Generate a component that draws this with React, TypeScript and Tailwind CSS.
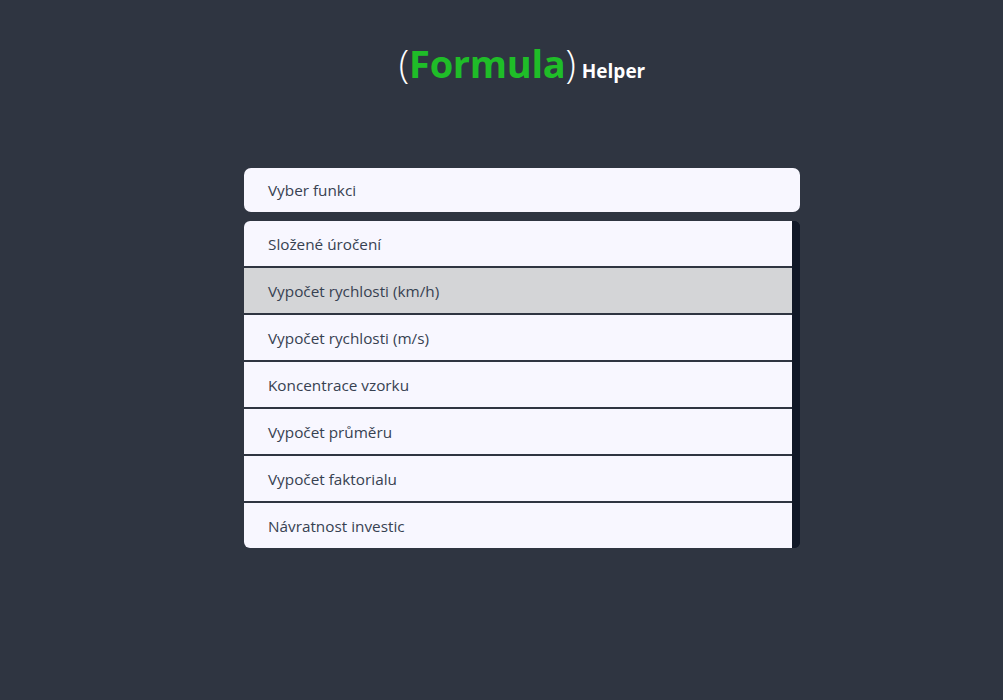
import React from "react";

const items = [
  "Složené úročení",
  "Vypočet rychlosti (km/h)",
  "Vypočet rychlosti (m/s)",
  "Koncentrace vzorku",
  "Vypočet průměru",
  "Vypočet faktorialu",
  "Návratnost investic",
];

export default function App() {
  return (
    <div
      className="min-h-[700px] w-full bg-[#2f3541] flex flex-col items-center pl-[41px]"
      style={{ fontFamily: '"Open Sans", "Noto Sans", sans-serif' }}
    >
      <h1 className="mt-[38px] flex items-baseline text-white">
        <span className="text-[38px] leading-[50px] font-light">(</span>
        <span className="text-[38px] leading-[50px] font-bold tracking-[-0.3px] text-[#1fbd28]">Formula</span>
        <span className="text-[38px] leading-[50px] font-light">)</span>
        <span className="ml-[6px] text-[19px] font-bold">Helper</span>
      </h1>
      <div className="mt-[80px] w-[556px]">
        <div className="h-[44px] rounded-[7px] bg-[#f8f7ff] flex items-center pl-[24px] pt-[1px] text-[15.3px] text-[#374151]">
          Vyber funkci
        </div>
        <div className="mt-[9px] flex rounded-[6px] overflow-hidden bg-[#111827]">
          <div className="flex-1 flex flex-col">
            {items.map((t, i) => (
              <div
                key={t}
                className={
                  (i === 1 ? "bg-[#d4d5d7] " : "bg-[#f8f7ff] ") +
                  (i < items.length - 1 ? "border-b-2 border-[#2f3541] " : "") +
                  "h-[44px] box-content flex items-center pl-[24px] pt-[1px] text-[15.3px] text-[#374151]"
                }
              >
                {t}
              </div>
            ))}
          </div>
          <div className="w-[8px] bg-[#111827]" />
        </div>
      </div>
    </div>
  );
}
